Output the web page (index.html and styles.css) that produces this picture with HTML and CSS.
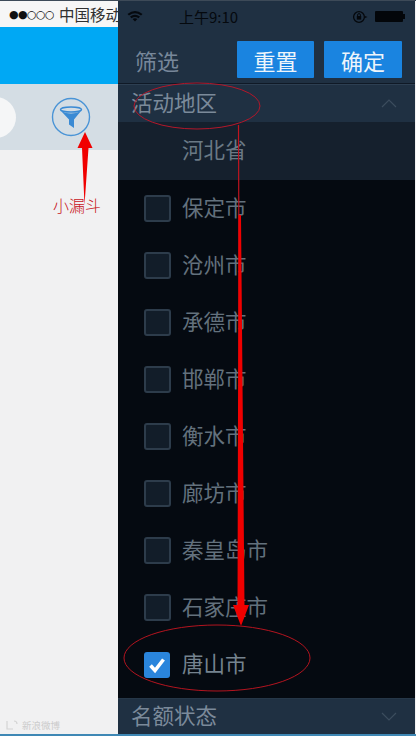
FILE: index.html
```html
<!DOCTYPE html>
<html lang="zh">
<head>
<meta charset="utf-8">
<title>筛选</title>
<link rel="stylesheet" href="styles.css">
</head>
<body>
<div class="page">
  <div class="back">
    <div class="back-status">
      <span class="dots">●●○○○</span><span class="carrier">中国移动</span>
    </div>
    <div class="back-blue"></div>
    <div class="back-tools">
      <div class="search-end"></div>
      <svg class="funnel" width="40" height="40" viewBox="0 0 40 40">
        <circle cx="20" cy="20" r="18.5" fill="none" stroke="#4a94d6" stroke-width="1.4"/>
        <ellipse cx="20" cy="12.5" rx="10.5" ry="2.6" fill="none" stroke="#3a8ad4" stroke-width="1.5"/>
        <path d="M10 14 Q15 16.5 20 16.5 Q25 16.5 30 14 L23 22.5 L23 31 L18 27.5 L18 22.5 Z" fill="#3a8ad4"/>
      </svg>
    </div>
    <div class="back-body">
      <svg class="mark-icon" width="12" height="10" viewBox="0 0 12 10">
        <path d="M1 1 V9 H7 M8 1 Q11 1 11 4" fill="none" stroke="#d4d4d4" stroke-width="1.2"/>
      </svg>
      <span class="mark-text">新浪微博</span>
    </div>
  </div>
  <div class="drawer">
    <div class="status">
      <svg class="wifi" width="16" height="12" viewBox="0 0 16 12">
        <path d="M0.5 4 Q8 -2 15.5 4 L14 5.6 Q8 1 2 5.6 Z M3 6.6 Q8 2.8 13 6.6 L11.5 8.2 Q8 5.8 4.5 8.2 Z M5.6 9 Q8 7.4 10.4 9 L8 11.6 Z" fill="#05090e"/>
      </svg>
      <span class="clock">上午9:10</span>
      <svg class="lock" width="16" height="14" viewBox="0 0 16 14">
        <circle cx="7" cy="7" r="5.4" fill="none" stroke="#05080c" stroke-width="1.3"/>
        <rect x="4.8" y="6" width="4.4" height="3.6" fill="#05080c"/>
        <path d="M5.6 6 V5 a1.4 1.4 0 0 1 2.8 0 V6" fill="none" stroke="#05080c"/>
        <path d="M13 6 L15.5 7 L13 8 Z" fill="#05080c"/>
      </svg>
      <span class="battery"></span><span class="battery-tip"></span>
    </div>
    <div class="bar">
      <span class="bar-title">筛选</span>
      <button class="btn reset">重置</button>
      <button class="btn ok">确定</button>
    </div>
    <div class="section first">
      <span class="label">活动地区</span>
      <svg class="chev" width="16" height="9" viewBox="0 0 16 9"><path d="M1 8 L8 1 L15 8" fill="none" stroke="#3c4d5e" stroke-width="1.2"/></svg>
    </div>
    <div class="province">河北省</div>
    <div class="list">
      <div class="row"><span class="box"></span><span class="label">保定市</span></div>
      <div class="row"><span class="box"></span><span class="label">沧州市</span></div>
      <div class="row"><span class="box"></span><span class="label">承德市</span></div>
      <div class="row"><span class="box"></span><span class="label">邯郸市</span></div>
      <div class="row"><span class="box"></span><span class="label">衡水市</span></div>
      <div class="row"><span class="box"></span><span class="label">廊坊市</span></div>
      <div class="row"><span class="box"></span><span class="label">秦皇岛市</span></div>
      <div class="row"><span class="box"></span><span class="label">石家庄市</span></div>
      <div class="row"><span class="box on"><svg width="26" height="26" viewBox="0 0 26 26"><path d="M6.5 13.5 L11 18.5 L19.5 7.5" fill="none" stroke="#fff" stroke-width="3.6"/></svg></span><span class="label">唐山市</span></div>
    </div>
    <div class="section last">
      <span class="label">名额状态</span>
      <svg class="chev" width="16" height="9" viewBox="0 0 16 9"><path d="M1 1 L8 8 L15 1" fill="none" stroke="#3c4d5e" stroke-width="1.2"/></svg>
    </div>
  </div>
  <svg class="notes" width="416" height="736" viewBox="0 0 416 736">
    <ellipse cx="197" cy="106" rx="63" ry="23" fill="none" stroke="#b3172a" stroke-width="1"/>
    <ellipse cx="217" cy="658" rx="93" ry="33" fill="none" stroke="#b3141f" stroke-width="1"/>
    <path d="M238.5 125 L240 560" fill="none" stroke="#c0141f" stroke-width="1.2"/>
    <path d="M238.5 215 L237.5 605 L233 605 L241 626 L249 605 L244.5 605 L241 215 Z" fill="#f00000"/>
    <path d="M85 132 L92.5 148 L88.5 148 L84.5 205 L82 148 L77.5 148 Z" fill="#f00000"/>
    <text class="note-text" x="53" y="212">小漏斗</text>
  </svg>
</div>
</body>
</html>
```
FILE: styles.css
```css
* { box-sizing: border-box; }
html, body { margin: 0; padding: 0; }
body {
  width: 416px;
  height: 736px;
  overflow: hidden;
  background: #f1f1f2;
  font-family: "Noto Sans CJK SC", "Liberation Sans", sans-serif;
}
.page {
  position: relative;
  display: flex;
  width: 416px;
  height: 736px;
  border-top: 1px solid #3d4a58;
  border-bottom: 2px solid #3f88b5;
}
.back {
  width: 118px;
  flex: none;
  display: flex;
  flex-direction: column;
  overflow: hidden;
}
.back-status {
  height: 26px;
  flex: none;
  display: flex;
  align-items: center;
  padding: 1px 0 0 9px;
  background: #f6f6f6;
  color: #303030;
  white-space: nowrap;
}
.dots { font: 11px/1 "DejaVu Sans", sans-serif; letter-spacing: -0.6px; width: 50px; flex: none; color: #111; }
.carrier { font-size: 15.5px; line-height: 1; }
.back-blue { height: 57px; flex: none; background: #00a8f4; }
.back-tools {
  height: 66px;
  flex: none;
  background: #d4dde4;
  display: flex;
  align-items: flex-start;
  justify-content: space-between;
  padding: 13px 27px 0 0;
}
.search-end {
  width: 41px;
  height: 41px;
  margin-left: -25px;
  border-radius: 50%;
  background: #f5f6f7;
}
.funnel { flex: none; }
.back-body {
  flex: 1;
  display: flex;
  align-items: flex-end;
  gap: 4px;
  padding: 0 0 3px 6px;
  background: #f1f1f2;
}
.mark-icon { flex: none; margin-bottom: 1px; }
.mark-text { font-size: 9.5px; line-height: 11px; color: #cccccc; }
.drawer {
  flex: 1;
  margin-right: 1px;
  display: flex;
  flex-direction: column;
  background: #050a11;
  color: #6b7986;
  font-size: 21.5px;
  line-height: 1;
}
.label { margin-bottom: 4px; }
.status {
  height: 40px;
  flex: none;
  display: flex;
  align-items: flex-start;
  padding: 9px 0 0 9px;
  background: #1f3042;
  color: #05090e;
}
.wifi { flex: none; }
.clock { width: 60px; flex: none; margin-left: 36px; margin-top: -1px; font-size: 15px; line-height: 16px; white-space: nowrap; }
.lock { flex: none; margin-left: 113px; }
.battery { width: 28px; height: 11px; margin: 1px 0 0 7px; background: #03060a; border-radius: 1px; }
.battery-tip { width: 2px; height: 5px; margin-top: 4px; background: #03060a; }
.bar {
  height: 43px;
  flex: none;
  display: flex;
  align-items: flex-start;
  padding-left: 18px;
  background: #1f3042;
  border-bottom: 1px solid #0f1926;
  color: #77879a;
}
.bar-title { width: 101px; flex: none; margin-left: -1px; margin-right: 1px; font-size: 22px; line-height: 38px; }
.btn {
  height: 37px;
  flex: none;
  padding: 0;
  border: 0;
  border-radius: 1px;
  background: #1a84e0;
  color: #eef5fb;
  font: 22px/34px "Noto Sans CJK SC", sans-serif;
}
.reset { width: 77px; }
.ok { width: 78px; margin-left: 10px; }
.section {
  height: 38px;
  flex: none;
  display: flex;
  align-items: center;
  justify-content: space-between;
  padding: 0 18px 0 13px;
  background: #1f3042;
  border-top: 1px solid #2d3f52;
  color: #7b8a9a;
}
.section.last { height: 36px; border-top-color: #263748; }
.chev { flex: none; }
.province {
  height: 58px;
  flex: none;
  padding: 15px 0 0 64px;
  background: #15202d;
  color: #6a7985;
  line-height: 24px;
}
.list {
  flex: 1;
  display: flex;
  flex-direction: column;
}
.row {
  height: 57px;
  flex: none;
  display: flex;
  align-items: center;
  gap: 11px;
  padding-left: 26px;
  color: #63717d;
}
.row:last-child { color: #75838f; }
.box {
  width: 27px;
  height: 27px;
  flex: none;
  border: 2px solid #2d3c4b;
  border-radius: 3px;
  background: #121d29;
}
.box.on {
  border: 0;
  width: 26px;
  height: 26px;
  margin-right: 1px;
  background: #2a85dc;
}
.box.on svg { display: block; }
.notes {
  position: absolute;
  left: 0;
  top: -1px;
  pointer-events: none;
}
.note-text {
  font-size: 16px;
  font-weight: 300;
  fill: #c8141c;
  font-family: "Noto Sans CJK SC", sans-serif;
}
```
